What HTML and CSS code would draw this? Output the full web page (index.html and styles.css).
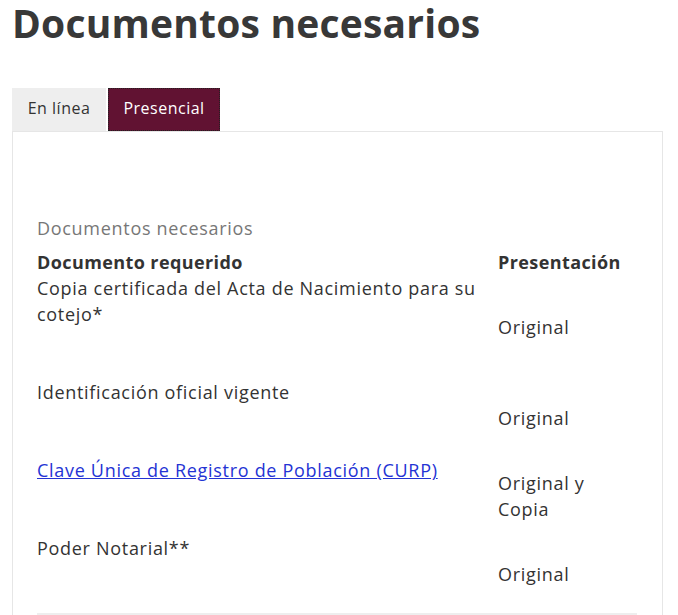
FILE: index.html
```html
<!DOCTYPE html>
<html lang="es">
<head>
<meta charset="utf-8">
<title>Documentos necesarios</title>
<link rel="stylesheet" href="styles.css">
</head>
<body>
<h1 class="title">Documentos necesarios</h1>
<div class="tabs">
  <div class="tab">En línea</div>
  <div class="tab tab-active">Presencial</div>
</div>
<div class="panel">
  <table class="docs">
    <caption class="docs-caption">Documentos necesarios</caption>
    <thead>
      <tr><th class="col-doc">Documento requerido</th><th class="col-pres">Presentación</th></tr>
    </thead>
    <tbody>
      <tr><td class="cell-doc">Copia certificada del Acta de Nacimiento para su cotejo*</td><td class="cell-pres">Original</td></tr>
      <tr><td class="cell-doc">Identificación oficial vigente</td><td class="cell-pres">Original</td></tr>
      <tr><td class="cell-doc"><a class="doc-link" href="#">Clave Única de Registro de Población (CURP)</a></td><td class="cell-pres">Original y Copia</td></tr>
      <tr><td class="cell-doc">Poder Notarial**</td><td class="cell-pres">Original</td></tr>
    </tbody>
  </table>
  <div class="docs-rule"></div>
</div>
</body>
</html>
```
FILE: styles.css
```css
html, body {
  margin: 0;
  padding: 0;
  background: #fff;
}
body {
  padding: 0 15px 0 12px;
  font-family: "Open Sans", "Liberation Sans", sans-serif;
  color: #333;
}
.title {
  margin: 0;
  padding-top: 2px;
  font-size: 39px;
  line-height: 42px;
  font-weight: 700;
  color: #383838;
  letter-spacing: 0.2px;
}
.tabs {
  display: flex;
  gap: 2px;
  margin-top: 44px;
}
.tab {
  height: 43px;
  box-sizing: border-box;
  padding-bottom: 3px;
  display: flex;
  align-items: center;
  justify-content: center;
  font-size: 16px;
  letter-spacing: 0.5px;
  color: #333;
  background: #eeeeee;
}
.tab:first-child {
  width: 94px;
}
.tab-active {
  width: 112px;
  background: #611232;
  color: #fff;
  outline: 1px dotted #222;
  outline-offset: -1px;
}
.panel {
  border: 1px solid #e6e6e6;
  border-bottom: none;
  padding: 83px 25px 0 24px;
}
.docs {
  width: 600px;
  border-collapse: collapse;
  font-size: 18px;
  line-height: 26px;
  letter-spacing: 0.7px;
  color: #333;
}
.docs-caption {
  text-align: left;
  color: #777;
  padding-bottom: 8px;
}
.docs th {
  text-align: left;
  font-weight: 700;
  vertical-align: top;
  padding: 0;
  letter-spacing: 0.4px;
}
.col-doc {
  width: 461px;
}
.docs td {
  padding: 0;
}
.cell-doc {
  vertical-align: top;
  padding-bottom: 52px !important;
  padding-right: 20px !important;
}
.cell-pres {
  vertical-align: middle;
}
.doc-link {
  color: #2433d4;
  text-decoration: underline;
}
.docs-rule {
  width: 600px;
  height: 3px;
  background: #eeeeee;
}
```
